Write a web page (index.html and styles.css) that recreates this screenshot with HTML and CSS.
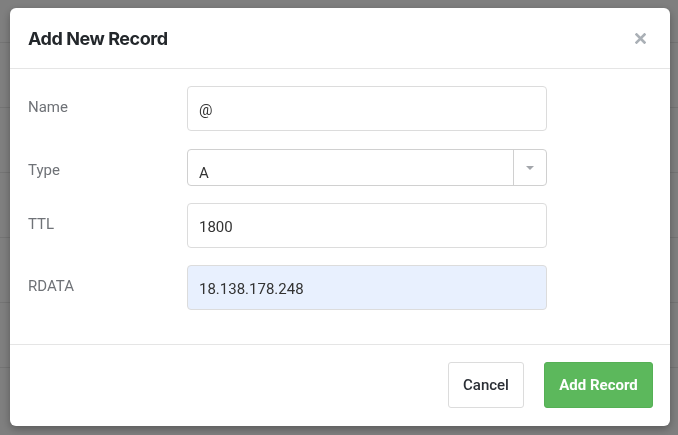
FILE: index.html
```html
<!DOCTYPE html>
<html>
<head>
<meta charset="utf-8">
<link rel="stylesheet" href="styles.css">
</head>
<body>
<div class="page">
  <div class="row"></div><div class="row"></div><div class="row"></div>
  <div class="row"></div><div class="row"></div><div class="row"></div>
</div>
<div class="backdrop"></div>
<div class="modal">
  <div class="modal-header">
    <h2 class="modal-title">Add New Record</h2>
    <svg class="close" width="11" height="11" viewBox="0 0 11 11"><path d="M1.5 1.5 L9.5 9.5 M9.5 1.5 L1.5 9.5" stroke="#aab0b6" stroke-width="2.6" stroke-linecap="square"/></svg>
  </div>
  <div class="modal-body">
    <div class="field">
      <label class="label">Name</label>
      <div class="input tall">@</div>
    </div>
    <div class="field">
      <label class="label">Type</label>
      <div class="input select"><span class="sel-value">A</span><span class="sel-arrow"><span class="caret"></span></span></div>
    </div>
    <div class="field">
      <label class="label">TTL</label>
      <div class="input tall">1800</div>
    </div>
    <div class="field">
      <label class="label">RDATA</label>
      <div class="input tall autofill">18.138.178.248</div>
    </div>
  </div>
  <div class="modal-footer">
    <button class="btn btn-default">Cancel</button>
    <button class="btn btn-success">Add Record</button>
  </div>
</div>
</body>
</html>
```
FILE: styles.css
```css
* { box-sizing: border-box; }
html, body { margin: 0; padding: 0; }
body {
  width: 678px; height: 435px; overflow: hidden;
  font-family: Roboto, "Liberation Sans", sans-serif;
  background: #fff;
}
.page { padding-top: 42px; }
.row { height: 65px; border-top: 1px solid #e8e8e8; }
.backdrop {
  position: fixed; inset: 0;
  background: rgba(0,0,0,0.5);
}
.modal {
  position: fixed; left: 10px; top: 8px;
  width: 660px; height: 418px;
  background: #fff;
  border-radius: 6px;
  box-shadow: 0 3px 9px rgba(0,0,0,0.3);
  display: flex; flex-direction: column;
}
.modal-header {
  height: 61px;
  border-bottom: 1px solid #e5e5e5;
  display: flex; align-items: center; justify-content: space-between;
  padding: 0 24px 0 18px;
}
.modal-title {
  margin: 0;
  font-family: Inter, Roboto, sans-serif;
  font-weight: 700; font-size: 18px;
  color: #23272b;
  letter-spacing: -0.45px;
}
.close { display: block; }
.modal-body {
  padding: 17px 18px 0 18px;
  height: 276px;
  border-bottom: 1px solid #e5e5e5;
  display: flex; flex-direction: column; gap: 17px;
}
.field { display: flex; align-items: flex-start; }
.field:nth-child(2) { margin-top: 1px; }
.label {
  width: 159px;
  font-size: 15px; line-height: 18px; color: #6f7277;
  padding-top: 12px;
}
.input {
  width: 360px;
  border: 1px solid #dcdcdc;
  border-radius: 4px;
  font-size: 15px; color: #333;
  padding: 2px 12px 0 11px;
  display: flex; align-items: center;
}
.tall { height: 45px; }
.autofill { background: #e8f0fe; }
.select {
  height: 37px; padding: 0 0 0 11px;
  border-color: #d0d0d0;
  align-items: stretch;
}
.sel-value { flex: 1; padding-top: 14px; line-height: 18px; }
.sel-arrow {
  width: 33px;
  border-left: 1px solid #d0d0d0;
  display: flex; align-items: center; justify-content: center;
}
.caret {
  width: 0; height: 0;
  border-left: 4px solid transparent;
  border-right: 4px solid transparent;
  border-top: 4px solid #a3a6ab;
}
.modal-footer {
  flex: 1;
  display: flex; justify-content: flex-end; align-items: flex-start;
  gap: 20px;
  padding: 17px 17px 0 0;
}
.btn {
  height: 46px;
  font-family: Roboto, sans-serif;
  font-size: 15px; font-weight: 500;
  border-radius: 3px;
  padding: 0 14px;
  cursor: pointer;
}
.btn-default {
  width: 76px;
  background: #fff; border: 1px solid #dcdcdc; color: #2b2f36;
}
.btn-success {
  width: 109px;
  background: #5cb85c; border: 1px solid #55b055; color: #fff;
  font-weight: 700;
}
```
